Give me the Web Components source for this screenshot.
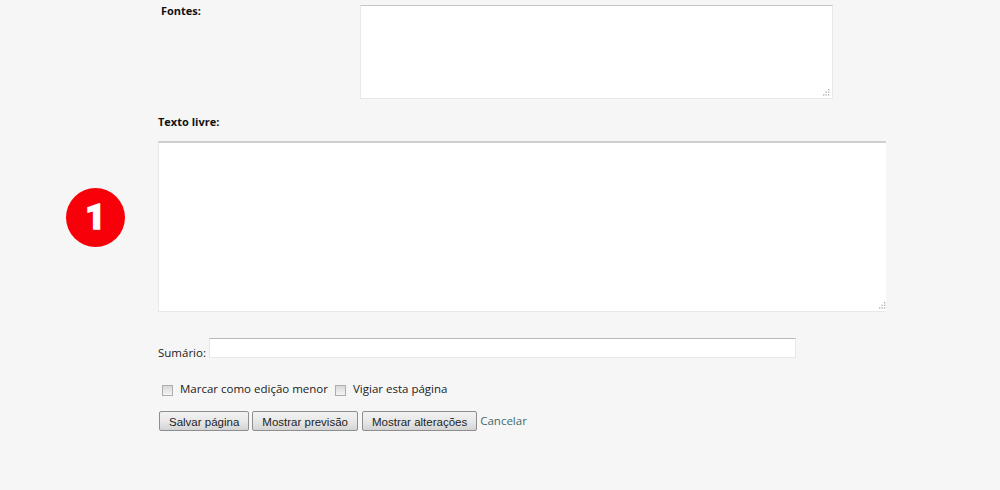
<!DOCTYPE html>
<html lang="pt">
<head>
<meta charset="utf-8">
<title>Editar</title>
<style>
    html, body {
        margin: 0;
        height: 100%;
        background: #f6f6f6;
    }
    body {
        font: 11.5px "Open Sans", "Liberation Sans", sans-serif;
        color: #222;
        overflow: hidden;
    }
</style>
</head>
<body>

<edit-form>
    <field-row slot="sources" label="Fontes:"><edit-area style="width:473px;height:94px"></edit-area></field-row>
    <number-badge slot="badge">1</number-badge>
    <edit-area slot="text" thick style="width:728px;height:171px"></edit-area>
    <label slot="summary">Sumário:</label>
    <summary-input slot="summary"></summary-input>
    <check-option slot="options">Marcar como edição menor</check-option>
    <check-option slot="options">Vigiar esta página</check-option>
    <push-button slot="actions">Salvar página</push-button>
    <push-button slot="actions">Mostrar previsão</push-button>
    <push-button slot="actions" style="margin-left:1px">Mostrar alterações</push-button>
    <a slot="actions" href="#" style="color:#3e6b68;text-decoration:none;font-size:11.5px;margin-top:-2px">Cancelar</a>
</edit-form>

<script>
const EditFormTemplate = document.createElement('template');

EditFormTemplate.innerHTML = `
    <style>
        :host {
            display: block;
            box-sizing: border-box;
            padding-top: 5px;
        }
        .indent {
            margin-left: 158px;
        }
        .text-label {
            font-weight: bold;
            font-size: 11px;
            color: #111;
            line-height: 16px;
            margin-top: 15px;
            margin-bottom: 11px;
        }
        .text-row {
            display: flex;
            align-items: flex-start;
        }
        .gutter {
            width: 158px;
            flex: none;
            box-sizing: border-box;
            padding: 47px 0 0 66px;
        }
        .summary-row {
            display: flex;
            align-items: flex-end;
            gap: 3px;
            margin-top: 26px;
            margin-left: 158px;
            line-height: 16px;
        }
        ::slotted(label) {
            margin-bottom: -3px;
        }
        .options {
            display: flex;
            align-items: center;
            gap: 7px;
            margin: 23px 0 0 162px;
        }
        .actions {
            display: flex;
            align-items: center;
            gap: 3px;
            margin: 14px 0 0 159px;
        }
    </style>
    <slot name="sources"></slot>
    <div class="text-label indent">Texto livre:</div>
    <div class="text-row">
        <div class="gutter"><slot name="badge"></slot></div>
        <slot name="text"></slot>
    </div>
    <div class="summary-row"><slot name="summary"></slot></div>
    <div class="options"><slot name="options"></slot></div>
    <div class="actions"><slot name="actions"></slot></div>
`;

class EditForm extends HTMLElement {
    constructor() {
        super();
        this.attachShadow({mode: 'open'});
        this.shadowRoot.appendChild(EditFormTemplate.content.cloneNode(true));
    }
}

const FieldRowTemplate = document.createElement('template');

FieldRowTemplate.innerHTML = `
    <style>
        :host {
            display: flex;
            align-items: flex-start;
            margin-left: 161px;
        }
        .label {
            width: 199px;
            flex: none;
            font-weight: bold;
            font-size: 11px;
            color: #111;
            line-height: 12px;
        }
    </style>
    <div class="label"></div>
    <slot></slot>
`;

class FieldRow extends HTMLElement {
    constructor() {
        super();
        this.attachShadow({mode: 'open'});
        this.shadowRoot.appendChild(FieldRowTemplate.content.cloneNode(true));
    }

    connectedCallback() {
        this.shadowRoot.querySelector('.label').textContent = this.getAttribute('label');
    }
}

const EditAreaTemplate = document.createElement('template');

EditAreaTemplate.innerHTML = `
    <style>
        :host {
            display: block;
            flex: none;
            position: relative;
            box-sizing: border-box;
        }
        textarea {
            display: block;
            width: 100%;
            height: 100%;
            margin: 0;
            box-sizing: border-box;
            background: #fff;
            border: 1px solid #e8e8ec;
            border-top: 1px solid #c6c6ca;
            outline: none;
            padding: 2px;
            font: inherit;
            resize: none;
        }
        :host([thick]) textarea {
            border-top: 2px solid #cfcfcf;
            border-right: 0;
        }
        svg {
            position: absolute;
            right: 3px;
            bottom: 3px;
        }
        :host([thick]) svg {
            right: 0;
        }
    </style>
    <textarea></textarea>
    <svg width="7" height="7" viewBox="0 0 7 7" fill="#b4b4b4">
        <rect x="5" y="0" width="1.4" height="1.4"/>
        <rect x="5" y="2.6" width="1.4" height="1.4"/>
        <rect x="2.4" y="2.6" width="1.4" height="1.4"/>
        <rect x="5" y="5.2" width="1.4" height="1.4"/>
        <rect x="2.4" y="5.2" width="1.4" height="1.4"/>
        <rect x="0" y="5.2" width="1.4" height="1.4"/>
    </svg>
`;

class EditArea extends HTMLElement {
    constructor() {
        super();
        this.attachShadow({mode: 'open'});
        this.shadowRoot.appendChild(EditAreaTemplate.content.cloneNode(true));
    }
}

const SummaryInputTemplate = document.createElement('template');

SummaryInputTemplate.innerHTML = `
    <style>
        :host {
            display: block;
            width: 587px;
            height: 20px;
        }
        input {
            display: block;
            width: 100%;
            height: 100%;
            margin: 0;
            padding: 1px 2px;
            box-sizing: border-box;
            background: #fff;
            border: 1px solid #e8e8ec;
            border-top: 1px solid #b8b8b8;
            outline: none;
        }
    </style>
    <input type="text">
`;

class SummaryInput extends HTMLElement {
    constructor() {
        super();
        this.attachShadow({mode: 'open'});
        this.shadowRoot.appendChild(SummaryInputTemplate.content.cloneNode(true));
    }
}

const CheckOptionTemplate = document.createElement('template');

CheckOptionTemplate.innerHTML = `
    <style>
        :host {
            display: inline-flex;
            align-items: center;
            gap: 7px;
            line-height: 16px;
        }
        .box {
            width: 9px;
            height: 9px;
            margin-top: 2px;
            border: 1px solid #adadad;
            background: linear-gradient(#d9d9d9, #f5f5f5);
        }
    </style>
    <span class="box"></span>
    <slot></slot>
`;

class CheckOption extends HTMLElement {
    constructor() {
        super();
        this.attachShadow({mode: 'open'});
        this.shadowRoot.appendChild(CheckOptionTemplate.content.cloneNode(true));
    }
}

const PushButtonTemplate = document.createElement('template');

PushButtonTemplate.innerHTML = `
    <style>
        :host {
            display: inline-block;
        }
        button {
            display: block;
            height: 20px;
            margin: 0;
            padding: 1px 9px 0;
            box-sizing: border-box;
            font: 11.5px "Liberation Sans", Arial, sans-serif;
            color: #222;
            background: linear-gradient(#f2f2f2, #e8e8e8 50%, #d4d4d4);
            border: 1px solid #8e8e8e;
            border-radius: 2px;
        }
    </style>
    <button type="button"><slot></slot></button>
`;

class PushButton extends HTMLElement {
    constructor() {
        super();
        this.attachShadow({mode: 'open'});
        this.shadowRoot.appendChild(PushButtonTemplate.content.cloneNode(true));
    }
}

const NumberBadgeTemplate = document.createElement('template');

NumberBadgeTemplate.innerHTML = `
    <style>
        :host {
            display: flex;
            align-items: center;
            justify-content: center;
            width: 59px;
            height: 59px;
            border-radius: 50%;
            background: #f80009;
            color: #fff;
            font: 900 35px/1 Roboto, "Liberation Sans", sans-serif;
            -webkit-text-stroke: 1.4px #fff;
        }
    </style>
    <slot></slot>
`;

class NumberBadge extends HTMLElement {
    constructor() {
        super();
        this.attachShadow({mode: 'open'});
        this.shadowRoot.appendChild(NumberBadgeTemplate.content.cloneNode(true));
    }
}

customElements.define('edit-form', EditForm);
customElements.define('field-row', FieldRow);
customElements.define('edit-area', EditArea);
customElements.define('summary-input', SummaryInput);
customElements.define('check-option', CheckOption);
customElements.define('push-button', PushButton);
customElements.define('number-badge', NumberBadge);
</script>
</body>
</html>
